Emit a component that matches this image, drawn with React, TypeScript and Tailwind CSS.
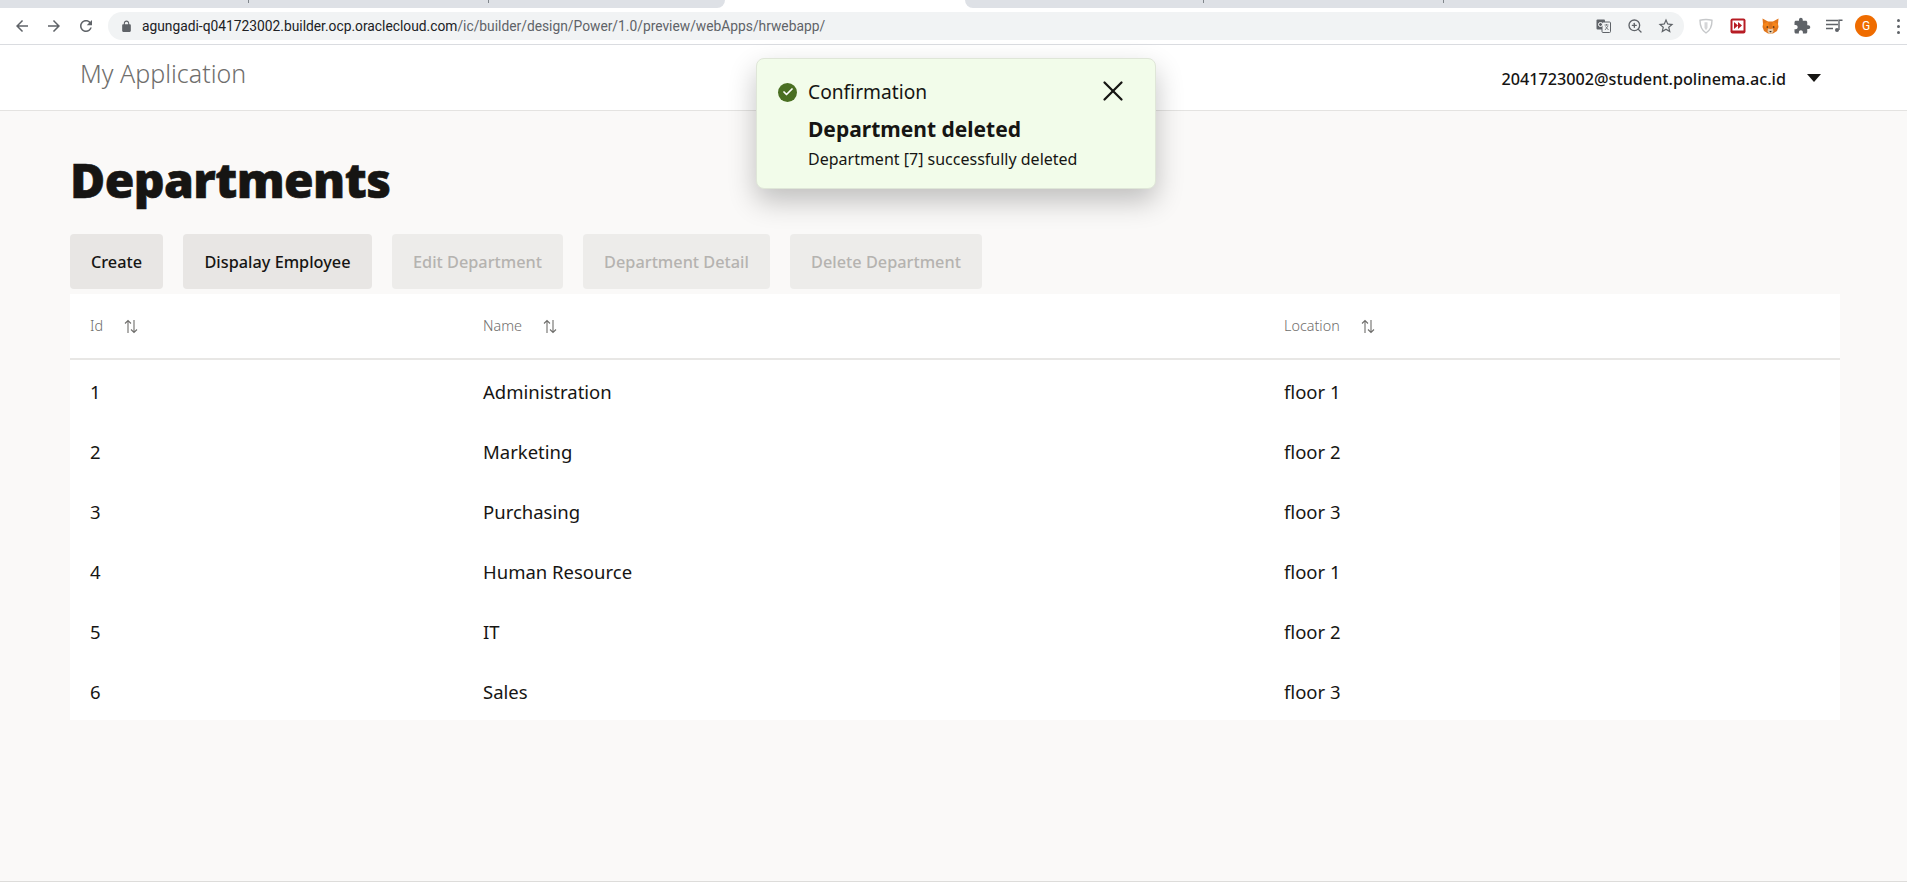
import { Check, X, ZoomIn } from "lucide-react"

const font = "font-['Noto_Sans',sans-serif]"

const departments = [
  { id: 1, name: "Administration", location: "floor 1" },
  { id: 2, name: "Marketing", location: "floor 2" },
  { id: 3, name: "Purchasing", location: "floor 3" },
  { id: 4, name: "Human Resource", location: "floor 1" },
  { id: 5, name: "IT", location: "floor 2" },
  { id: 6, name: "Sales", location: "floor 3" },
]

function SortIcon() {
  return (
    <svg width="14" height="15" viewBox="0 0 14 15" fill="none" stroke="#6f6e6c" strokeWidth="1.1">
      <path d="M4 14V1.5M1 4.5l3-3 3 3" />
      <path d="M10 1v12.5M7 10.5l3 3 3-3" />
    </svg>
  )
}

function MaterialIcon({ d, size = 18, color = "#5f6368" }: { d: string; size?: number; color?: string }) {
  return (
    <svg width={size} height={size} viewBox="0 0 24 24" fill={color}>
      <path d={d} />
    </svg>
  )
}

function BrowserBar() {
  return (
    <div className="shrink-0">
      {/* tab strip */}
      <div className="flex h-2 bg-white">
        <div className="relative w-[725px] rounded-br-lg bg-[#dee1e6]">
          <div className="absolute left-[248px] top-0 h-[3px] w-px bg-[#80868b]" />
          <div className="absolute left-[488px] top-0 h-[3px] w-px bg-[#80868b]" />
        </div>
        <div className="w-[240px]" />
        <div className="relative flex-1 rounded-bl-lg bg-[#dee1e6]">
          <div className="absolute left-[238px] top-0 h-[3px] w-px bg-[#80868b]" />
          <div className="absolute left-[478px] top-0 h-[3px] w-px bg-[#80868b]" />
        </div>
      </div>
      {/* toolbar */}
      <div className="flex h-[37px] items-start border-b border-[#dadce0] bg-white pl-[6px] pr-px pt-1">
        <div className="flex h-7 w-8 items-center justify-center">
          <MaterialIcon d="M20 11H7.83l5.59-5.59L12 4l-8 8 8 8 1.41-1.41L7.83 13H20v-2z" />
        </div>
        <div className="flex h-7 w-8 items-center justify-center">
          <MaterialIcon d="M12 4l-1.41 1.41L16.17 11H4v2h12.17l-5.58 5.59L12 20l8-8z" />
        </div>
        <div className="flex h-7 w-8 items-center justify-center">
          <MaterialIcon d="M17.65 6.35C16.2 4.9 14.21 4 12 4c-4.42 0-7.99 3.58-7.99 8s3.57 8 7.99 8c3.73 0 6.84-2.55 7.73-6h-2.08c-.82 2.33-3.04 4-5.65 4-3.31 0-6-2.69-6-6s2.69-6 6-6c1.66 0 3.14.69 4.22 1.78L13 11h7V4l-2.35 2.35z" />
        </div>
        <div className="ml-[6px] flex h-7 flex-1 items-center rounded-full bg-[#f1f3f4] pl-3">
          <MaterialIcon size={13} d="M18 8h-1V6c0-2.76-2.24-5-5-5S7 3.24 7 6v2H6c-1.1 0-2 .9-2 2v10c0 1.1.9 2 2 2h12c1.1 0 2-.9 2-2V10c0-1.1-.9-2-2-2zM9 8V6c0-1.66 1.34-3 3-3s3 1.34 3 3v2H9z" />
          <span className="ml-[9px] whitespace-nowrap font-['Roboto',sans-serif] text-[13.8px] text-[#5f6368]">
            <span className="text-[#202124]">agungadi-q041723002.builder.ocp.oraclecloud.com</span>
            /ic/builder/design/Power/1.0/preview/webApps/hrwebapp/
          </span>
          <div className="ml-auto mr-[3px] flex">
            <div className="flex h-7 w-8 items-center justify-center">
              <svg width="15" height="14" viewBox="0 0 15 14">
                <rect x="0.5" y="0.5" width="8.5" height="10" rx="1" fill="#5f6368" />
                <rect x="6" y="3" width="8.5" height="10.5" rx="1" fill="#f1f3f4" stroke="#5f6368" />
                <path d="M8.5 6h4M10.5 5v1.5M9 11l3-4M9.5 7.5l3 3.5" stroke="#5f6368" fill="none" strokeWidth="0.8" />
                <circle cx="4.5" cy="5.5" r="2" fill="none" stroke="#fff" strokeWidth="1" />
              </svg>
            </div>
            <div className="flex h-7 w-8 items-center justify-center">
              <ZoomIn size={16} color="#5f6368" strokeWidth={2} />
            </div>
            <div className="flex h-7 w-[30px] items-center justify-center">
              <MaterialIcon size={18} d="M22 9.24l-7.19-.62L12 2 9.19 8.63 2 9.24l5.46 4.73L5.82 21 12 17.27 18.18 21l-1.63-7.03L22 9.24zM12 15.4l-3.76 2.27 1-4.28-3.32-2.88 4.38-.38L12 6.1l1.71 4.04 4.38.38-3.32 2.88 1 4.28L12 15.4z" />
            </div>
          </div>
        </div>
        <div className="ml-[6px] flex">
          <div className="flex h-7 w-8 items-center justify-center">
            <svg width="14" height="16" viewBox="0 0 14 16" fill="none" stroke="#c6c8ca" strokeWidth="1.4">
              <path d="M1 2.2C4.5 1.4 9.5 1.4 13 2.2 13 8 11 12.5 7 15 3 12.5 1 8 1 2.2z" />
              <path d="M5.5 4.2h3V10L7 12.2 5.5 10z" fill="#d5d6d8" stroke="none" />
            </svg>
          </div>
          <div className="flex h-7 w-8 items-center justify-center">
            <svg width="16" height="16" viewBox="0 0 16 16">
              <rect x="0.5" y="0.5" width="15" height="15" rx="2" fill="#b71c24" />
              <rect x="2.5" y="2.5" width="11" height="10" fill="#fff" />
              <path d="M4 4l4 3.5L4 11zM8 4l4 3.5L8 11z" fill="#b71c24" />
            </svg>
          </div>
          <div className="flex h-7 w-8 items-center justify-center">
            <svg width="17" height="16" viewBox="0 0 17 16">
              <path d="M0.5 0.5L6 3.5h5L16.5 0.5 16 6l.5 3-1.5 4-4 2.5H6L2 13 .5 9 1 6z" fill="#e2761b" />
              <path d="M1 6l5-2.5L7 8 3 10zM16 6l-5-2.5L10 8l4 2z" fill="#f6851b" />
              <path d="M6 10.5l2.5 .5 2.5-.5 .5 3-1.5 2H7l-1.5-2z" fill="#e4c9a8" />
              <path d="M7.2 13h2.6L8.5 14.5z" fill="#2f241c" />
              <circle cx="5.3" cy="9" r="0.8" fill="#2f241c" />
              <circle cx="11.7" cy="9" r="0.8" fill="#2f241c" />
            </svg>
          </div>
          <div className="flex h-7 w-8 items-center justify-center">
            <MaterialIcon size={18} d="M20.5 11H19V7c0-1.1-.9-2-2-2h-4V3.5C13 2.12 11.88 1 10.5 1S8 2.12 8 3.5V5H4c-1.1 0-1.99.9-1.99 2v3.8H3.5c1.49 0 2.7 1.21 2.7 2.7s-1.21 2.7-2.7 2.7H2V20c0 1.1.9 2 2 2h3.8v-1.5c0-1.49 1.21-2.7 2.7-2.7 1.49 0 2.7 1.21 2.7 2.7V22H17c1.1 0 2-.9 2-2v-4h1.5c1.38 0 2.5-1.12 2.5-2.5S21.88 11 20.5 11z" />
          </div>
          <div className="flex h-7 w-8 items-center justify-center">
            <svg width="17" height="14" viewBox="0 0 17 14" fill="none" stroke="#5f6368" strokeWidth="1.4">
              <path d="M0 1.5h12M0 5.5h12M0 9.5h7" />
              <path d="M13 11V1.2h3.5" />
              <circle cx="11" cy="11" r="2" fill="#5f6368" stroke="none" />
            </svg>
          </div>
          <div className="flex h-7 w-8 items-center justify-center">
            <div className="flex h-[22px] w-[22px] items-center justify-center rounded-full bg-[#ef6c00] font-['Roboto',sans-serif] text-xs text-white">
              G
            </div>
          </div>
          <div className="ml-2 flex h-7 w-4 flex-col items-center justify-center gap-[3px]">
            <div className="h-[3px] w-[3px] rounded-full bg-[#5f6368]" />
            <div className="h-[3px] w-[3px] rounded-full bg-[#5f6368]" />
            <div className="h-[3px] w-[3px] rounded-full bg-[#5f6368]" />
          </div>
        </div>
      </div>
    </div>
  )
}

function Toast() {
  return (
    <div className="absolute left-[756px] top-[13px] z-10 h-[131px] w-[400px] rounded-lg border border-[#dfe6d8] bg-[#f2fcea] shadow-[0_12px_28px_rgba(0,0,0,0.24)]">
      <div className="flex h-[26px] items-center pl-[21px] pr-[25px] mt-[20px]">
        <div className="flex h-[19px] w-[19px] items-center justify-center rounded-full bg-[#4a6f22]">
          <Check size={12} color="#fff" strokeWidth={3.5} />
        </div>
        <span className="ml-[11px] text-[19.2px] leading-[26px] text-[#161513]">Confirmation</span>
        <X size={34} color="#161513" strokeWidth={1.6} className="ml-auto -translate-y-px" />
      </div>
      <div className="pl-[51px] pt-[10px]">
        <div className="text-[21px] font-bold leading-7 text-[#161513]">Department deleted</div>
        <div className="mt-1 text-base leading-6 text-[#161513]">Department [7] successfully deleted</div>
      </div>
    </div>
  )
}

export default function App() {
  return (
    <div className={`flex h-[891px] flex-col overflow-hidden bg-white ${font}`}>
      <BrowserBar />
      <div className="relative flex flex-1 flex-col">
        <Toast />
        <header className="flex h-[66px] shrink-0 items-center border-b border-[#e4e3e1] bg-white pl-[80px] pr-[86px]">
          <span className="mb-[8px] text-[25px] font-light text-[#6f6e6c]">My Application</span>
          <span className="ml-auto mt-[4px] text-[16.2px] font-medium text-[#161513]">2041723002@student.polinema.ac.id</span>
          <svg width="14" height="8" viewBox="0 0 14 8" className="ml-[21px]">
            <path d="M0 0h14L7 8z" fill="#161513" />
          </svg>
        </header>

        <main className="h-[771px] shrink-0 border-b border-[#dddcda] bg-[#faf9f8] pl-[70px] pr-[67px]">
          <h1 className="mt-[34px] text-[48px] font-black leading-[70px] tracking-[-0.6px] text-[#161513] [-webkit-text-stroke:0.6px_#161513]">Departments</h1>

          <div className="mt-[19px] flex gap-5">
            <button className="h-[55px] w-[93px] rounded bg-[#e8e6e4] pt-[2px] text-[16.3px] font-medium text-[#161513]">Create</button>
            <button className="h-[55px] w-[189px] rounded bg-[#e8e6e4] pt-[2px] text-[16.3px] font-medium text-[#161513]">Dispalay Employee</button>
            <button className="h-[55px] w-[171px] rounded bg-[#edecea] pt-[2px] text-[16.3px] font-medium text-[#b5b3b0]">Edit Department</button>
            <button className="h-[55px] w-[187px] rounded bg-[#edecea] pt-[2px] text-[16.3px] font-medium text-[#b5b3b0]">Department Detail</button>
            <button className="h-[55px] w-[192px] rounded bg-[#edecea] pt-[2px] text-[16.3px] font-medium text-[#b5b3b0]">Delete Department</button>
          </div>

          {/* table */}
          <div className="mt-[5px] bg-white">
            <div className="grid h-[66px] grid-cols-[393px_801px_1fr] border-b-2 border-[#e8e7e5] text-[14.4px] font-light text-[#6f6e6c]">
              <div className="flex items-center pl-5">Id<span className="ml-[21px]"><SortIcon /></span></div>
              <div className="flex items-center pl-5">Name<span className="ml-[21px]"><SortIcon /></span></div>
              <div className="flex items-center pl-5">Location<span className="ml-[21px]"><SortIcon /></span></div>
            </div>
            {departments.map((d) => (
              <div key={d.id} className="grid h-[60px] grid-cols-[393px_801px_1fr] text-[18.5px] text-[#161513]">
                <div className="flex items-center pl-5 pt-[3px]">{d.id}</div>
                <div className="flex items-center pl-5 pt-[3px]">{d.name}</div>
                <div className="flex items-center pl-5 pt-[3px]">{d.location}</div>
              </div>
            ))}
          </div>
        </main>
      </div>
    </div>
  )
}
